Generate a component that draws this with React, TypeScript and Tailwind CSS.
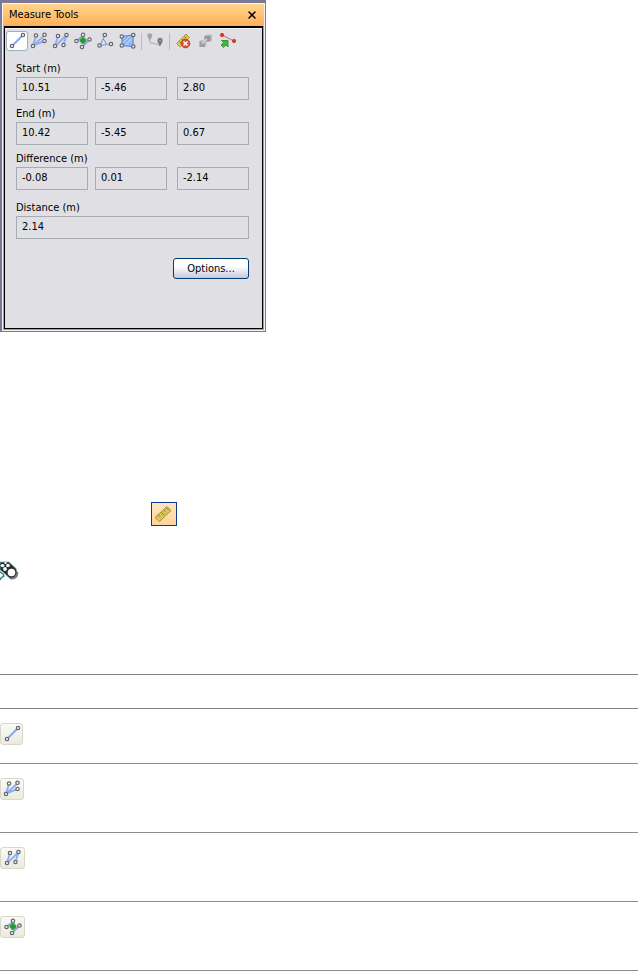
import React from 'react';
import { X } from 'lucide-react';

type IconProps = { className?: string };

// small round vertex used by all of the measuring icons
const Node: React.FC<{ x: number; y: number }> = ({ x, y }) => (
  <circle cx={x} cy={y} r="1.7" fill="#f4f4f4" stroke="#66666c" strokeWidth="1.2" />
);

const Icon: React.FC<{ children: React.ReactNode; className?: string }> = ({ children, className }) => (
  <svg viewBox="0 0 22 20" fill="none" aria-hidden="true" className={className ?? 'w-[22px] h-5 shrink-0'}>
    {children}
  </svg>
);

const LineIcon: React.FC<IconProps> = ({ className }) => (
  <Icon className={className}>
    <path d="M6.5 14.5 17 4" stroke="#86aaf0" strokeWidth="2" />
    <Node x={6} y={15} />
    <Node x={17} y={4} />
  </Icon>
);

const MultiPointIcon: React.FC<IconProps> = ({ className }) => (
  <Icon className={className}>
    <path d="M5 14.5 8 5M5 14.5 16.5 4.5M5 14.5 16.5 10" stroke="#8fb0f0" strokeWidth="2" />
    <Node x={5} y={15} />
    <Node x={8} y={4.5} />
    <Node x={16.5} y={3.8} />
    <Node x={16.5} y={10} />
  </Icon>
);

const PolylineIcon: React.FC<IconProps> = ({ className }) => (
  <Icon className={className}>
    <path d="M5 14.5 8 5.5M6 14.5 16 4.5M16.5 4.5 13.500 13.5" stroke="#8fb0f0" strokeWidth="2" />
    <Node x={5} y={15} />
    <Node x={8} y={5} />
    <Node x={16.5} y={4} />
    <Node x={13.5} y={14} />
  </Icon>
);

const ShortestIcon: React.FC<IconProps> = ({ className }) => (
  <Icon className={className}>
    <path d="M5 10 11.5 4M10.5 15.5 17 9" stroke="#86aaf0" strokeWidth="2" />
    <Node x={4.5} y={10} />
    <Node x={11} y={3.8} />
    <Node x={17.5} y={8.5} />
    <Node x={10} y={16} />
    <path d="M9.5 6.500h3v1.500H14v3h-1.500v1.500h-3V11H8V8h1.500z" fill="#1f9a2c" stroke="#46b34b" strokeWidth="0.8" />
  </Icon>
);

const AngleIcon: React.FC = () => (
  <Icon>
    <path d="M11 4 6 14.500 17 13" stroke="#92aee6" strokeWidth="1.6" />
    <path d="M9 8q3 1.5 3 5" stroke="#8c8c96" />
    <Node x={10.8} y={4} />
    <Node x={5.5} y={14.5} />
    <Node x={17} y={13} />
  </Icon>
);

const AreaIcon: React.FC = () => (
  <Icon>
    <path d="M6 5.5 17 4v11.5L6 14.5z" fill="#a8c5f4" stroke="#4f86e0" strokeWidth="1.200" />
    <path d="M7 10l5-5M7 14l9-9M12 14.500l4-4" stroke="#6c9be8" />
    <Node x={5.8} y={5.5} />
    <Node x={5.8} y={14.5} />
    <Node x={17.3} y={4} />
    <Node x={17.3} y={15.5} />
  </Icon>
);

const PinsIcon: React.FC = () => (
  <Icon>
    <path d="M5.500 9c0 6 5 1 10.500 5.500" stroke="#b4b4b8" strokeWidth="1.2" />
    <path d="M5.700 10 3.500 5.500a2.400 2.400 0 1 1 4.500 0z" fill="#a4a4a8" />
    <path d="M16 15.500l-2.500-5a2.700 2.700 0 1 1 5 0z" fill="#77777c" />
    <circle cx="16" cy="9.5" r="0.9" fill="#a9a9ad" />
  </Icon>
);

const ClearIcon: React.FC = () => (
  <Icon>
    <path d="M4.500 12.500 14 3l3.500 3.500L8 16z" fill="#dcc84a" stroke="#b09a3c" />
    <path d="M7.500 10.500 9 12M10 8l2 2M12.500 5.500 14 7" stroke="#7d6b22" />
    <circle cx="13.5" cy="12.500" r="4.3" fill="#e0543a" stroke="#b84030" />
    <path d="M11.500 10.500l4 4M15.500 10.500l-4 4" stroke="#fff" strokeWidth="1.5" />
  </Icon>
);

const TransformIcon: React.FC = () => (
  <Icon>
    <path d="M5.500 10.500 7 9h5.500v5.500L11 16H5.500z" fill="#c2c2c6" />
    <path d="M5.500 10.500H11V16H5.500z" fill="#a0a0a4" />
    <path d="M10.500 5 12 3.500h6v5.500L16.500 10.500h-6z" fill="#bcbcc0" />
    <path d="M10.500 5h6v5.500h-6z" fill="#98989c" />
    <path d="M8 12.500l5-4.500" stroke="#d8d8dc" strokeWidth="1.5" />
  </Icon>
);

const RedlineIcon: React.FC = () => (
  <Icon>
    <path d="M6 4 18 10" stroke="#d8807c" strokeWidth="1.3" />
    <circle cx="6" cy="4" r="1.7" fill="#e03418" stroke="#b82410" strokeWidth="0.6" />
    <circle cx="18" cy="10" r="1.7" fill="#e03418" stroke="#b82410" strokeWidth="0.6" />
    <path d="M5.500 9.500H12V16l-2-2-2.500 2.500L5 14l2.500-2.500z" fill="#3fb83f" stroke="#238a28" strokeWidth="0.8" />
  </Icon>
);

const RulerIcon: React.FC = () => (
  <svg viewBox="0 0 24 22" fill="none" aria-hidden="true" className="w-6 h-[22px]">
    <path d="M3 14.500 15 3.500l4 4L7.500 18.500z" fill="#d6c650" stroke="#a8923c" />
    <path d="M6.500 12 8 13.500M9.500 9.500 12 12M12 7l1.500 1.500M14.500 5 17 7.500" stroke="#8a7a2a" />
    <path d="M6 15.500l1.500 1M15 8.500l1.500-1.500" stroke="#efe59a" />
  </svg>
);

const MouseIcon: React.FC = () => (
  <svg viewBox="0 0 19 20" fill="none" aria-hidden="true" className="w-[19px] h-5">
    <path d="M0 11l3 2 1 2-3 2-1 2" stroke="#1f7f84" strokeWidth="1.4" />
    <path d="M0 1h9l7 6.500 1.500 5L14 17l-4 .5L3 11 0 9z" fill="#2c2c30" stroke="#58b4b8" strokeWidth="0.8" />
    <path d="M10.500 17.500q6.500.5 7-6" stroke="#77777c" strokeWidth="2" />
    <ellipse cx="11.5" cy="11.5" rx="3.8" ry="3.800" fill="#fff" />
    <ellipse cx="5" cy="8" rx="1.9" ry="2.1" fill="#fff" />
    <ellipse cx="8" cy="4.500" rx="1.900" ry="1.700" fill="#fff" />
    <ellipse cx="2.500" cy="4.500" rx="1.900" ry="1.600" fill="#fff" />
    <ellipse cx="5.500" cy="2" rx="1.200" ry="0.900" fill="#fff" />
  </svg>
);

const tools = [
  { name: 'Point to point', icon: LineIcon },
  { name: 'Point to multiple points', icon: MultiPointIcon },
  { name: 'Point line', icon: PolylineIcon },
  { name: 'Accumulate', icon: ShortestIcon },
  { name: 'Angle', icon: AngleIcon },
  { name: 'Area', icon: AreaIcon },
  null,
  { name: 'Shortest distance', icon: PinsIcon },
  null,
  { name: 'Clear', icon: ClearIcon },
  { name: 'Transform', icon: TransformIcon },
  { name: 'Convert to redlines', icon: RedlineIcon },
];

const readings = [
  { label: 'Start (m)', values: ['10.51', '-5.46', '2.80'] },
  { label: 'End (m)', values: ['10.42', '-5.45', '0.67'] },
  { label: 'Difference (m)', values: ['-0.08', '0.01', '-2.14'] },
];

const rows = [
  { name: 'Point to point', icon: LineIcon, height: 'h-[55px]', tile: 'w-[23px]' },
  { name: 'Point to multiple points', icon: MultiPointIcon, height: 'h-[69px]', tile: 'w-6' },
  { name: 'Point line', icon: PolylineIcon, height: 'h-[69px]', tile: 'w-[25px]' },
  { name: 'Accumulate', icon: ShortestIcon, height: 'h-[69px]', tile: 'w-[25px]' },
];

const fieldClass = 'block h-[23px] border border-[#a5acb2] bg-transparent pl-[5px] pb-0.5 outline-none';

const MeasureTools: React.FC = () => (
  <section className="w-[266px] border-t-[3px] border-l-2 border-r border-b border-[#7a7896] bg-white">
    <div className="border border-[#f4f3f8] bg-[#a09fb0]">
      {/* Title bar */}
      <header className="flex h-[22px] items-center justify-between bg-linear-to-b from-[#ffd58c] to-[#ffaf58] px-1.5">
        <h1>Measure Tools</h1>
        <button type="button" aria-label="Close">
          <X className="size-3" strokeWidth={3} />
        </button>
      </header>

      <div className="mx-px mb-px border border-t-2 border-black bg-[#e0dfe3]">
        {/* Toolbar */}
        <div className="flex h-[33px] items-start border-t border-[#f5f5f7] pl-px pt-0.5">
          {tools.map((tool, i) =>
            tool ? (
              <button
                key={i}
                type="button"
                aria-label={tool.name}
                className={i === 0 ? 'rounded-[3px] bg-white ring-1 ring-inset ring-[#9db0c2]' : ''}
              >
                <tool.icon />
              </button>
            ) : (
              <span key={i} className="ml-[3px] mr-0.5 mt-0.5 h-[17px] w-px bg-[#bdbcc2]" />
            )
          )}
        </div>

        {/* Readings */}
        <div className="pl-[11px] pr-[13px] pb-[49px]">
          {readings.map(reading => (
            <fieldset key={reading.label} className="mb-1.5">
              <legend className="h-4 leading-4">{reading.label}</legend>
              <div className="grid grid-cols-[79px_82px_72px]">
                {reading.values.map((value, i) => (
                  <input
                    key={i}
                    readOnly
                    aria-label={`${reading.label} ${'XYZ'[i]}`}
                    defaultValue={value}
                    className={`${fieldClass} w-[72px]`}
                  />
                ))}
              </div>
            </fieldset>
          ))}
          <label htmlFor="distance" className="mt-2.5 block h-4 leading-4">
            Distance (m)
          </label>
          <input id="distance" readOnly defaultValue="2.14" className={`${fieldClass} w-full`} />
          <div className="mt-[19px] flex justify-end">
            <button
              type="button"
              className="h-[21px] w-[76px] rounded-[3px] border border-[#003c74] bg-linear-to-b from-white from-40% to-[#c9c7dc]"
            >
              Options...
            </button>
          </div>
        </div>
      </div>
    </div>
  </section>
);

export default function App() {
  return (
    <main className="bg-white font-['DejaVu_Sans_Condensed','DejaVu_Sans',sans-serif] text-[11px] leading-4 text-black">
      <MeasureTools />

      <div className="mt-[170px] pl-[151px]">
        <button
          type="button"
          aria-label="Measure"
          className="block border border-[#0b3c94] bg-linear-to-b from-[#ffe6c4] to-[#ffd29a]"
        >
          <RulerIcon />
        </button>
      </div>

      <div className="mt-[35px]">
        <MouseIcon />
      </div>

      <table className="mt-[93px] w-full border-separate border-spacing-0 border-t border-[#808080]">
        <tbody>
          <tr>
            <td className="h-[34px] border-b border-[#808080] p-0" />
          </tr>
          {rows.map(row => (
            <tr key={row.name}>
              <td className={`${row.height} border-b border-[#8c8c8c] p-0 pt-3.5 align-top`}>
                <button
                  type="button"
                  aria-label={row.name}
                  className={`${row.tile} flex h-[22px] items-center justify-center rounded-[3px] border border-[#d9d7ca] bg-linear-to-b from-[#fafaf6] to-[#eceadf]`}
                >
                  <row.icon className="h-5 w-[22px] shrink-0" />
                </button>
              </td>
            </tr>
          ))}
        </tbody>
      </table>
    </main>
  );
}
